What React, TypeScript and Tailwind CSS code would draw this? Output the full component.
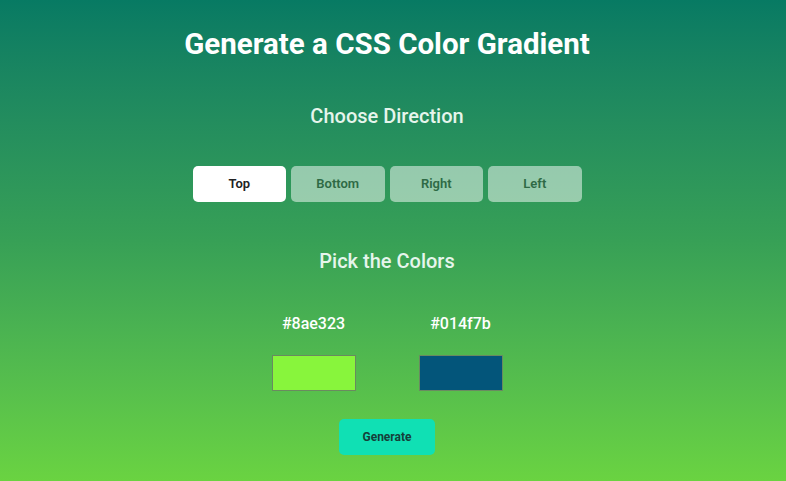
export default function App() {
  const dirs = ["Top", "Bottom", "Right", "Left"];
  return (
    <div
      className="w-[786px] h-[481px] pr-[12px] flex flex-col items-center bg-gradient-to-b from-[#077a63] via-[#37a056] to-[#6ad341]"
      style={{ fontFamily: "Roboto, 'Noto Sans', sans-serif" }}
    >
      <h1 className="mt-[25px] text-[29.5px] leading-[38px] font-bold text-white">
        Generate a CSS Color Gradient
      </h1>
      <h2 className="mt-[41px] text-[20px] leading-[24px] font-medium text-[#e6f5ec]">
        Choose Direction
      </h2>
      <div className="mt-[38px] flex gap-[5px]">
        {dirs.map((d, i) => (
          <button
            key={d}
            className={
              i === 0
                ? "w-[93.5px] h-[36px] rounded-[5px] bg-white text-[13px] font-semibold text-[#222]"
                : "w-[93.5px] h-[36px] rounded-[5px] bg-white/50 text-[13px] font-semibold text-[#2e6a45]"
            }
          >
            {d}
          </button>
        ))}
      </div>
      <h2 className="mt-[47px] text-[20px] leading-[24px] font-medium text-[#e6f5ec]">
        Pick the Colors
      </h2>
      <div className="mt-[41px] flex gap-[63px]">
        {[
          ["#8ae323", "bg-[#88f53c]"],
          ["#014f7b", "bg-[#03557a]"],
        ].map(([hex, cls]) => (
          <div key={hex} className="flex flex-col items-center">
            <span className="text-[16px] leading-[20px] font-medium text-white">{hex}</span>
            <div className={`mt-[21px] w-[84px] h-[36px] border border-[#6a8a60] ${cls}`} />
          </div>
        ))}
      </div>
      <button className="mt-[28px] w-[96px] h-[36px] rounded-[5px] bg-[#10e0b4] text-[12px] font-bold text-[#15403a]">
        Generate
      </button>
    </div>
  );
}
